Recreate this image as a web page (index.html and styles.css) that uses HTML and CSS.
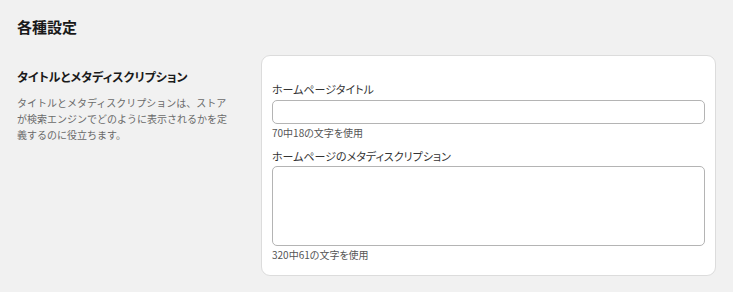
FILE: index.html
```html
<!DOCTYPE html>
<html lang="ja">
  <head>
    <meta charset="UTF-8" />
    <meta name="viewport" content="width=device-width, initial-scale=1.0" />
    <title>各種設定</title>
    <link rel="stylesheet" href="styles.css">
  </head>
  <body>
    <div class="page">
      <h1 class="page-title">各種設定</h1>
      <div class="section">
        <div class="section-info">
          <h2 class="section-title">タイトルとメタディスクリプション</h2>
          <p class="section-desc">タイトルとメタディスクリプションは、ストアが検索エンジンでどのように表示されるかを定義するのに役立ちます。</p>
        </div>
        <div class="card">
          <label class="field-label" for="page-title">ホームページタイトル</label>
          <input class="field-input" type="text" id="page-title" />
          <div class="field-help">70中18の文字を使用</div>
          <label class="field-label label-second" for="meta-desc">ホームページのメタディスクリプション</label>
          <textarea class="field-textarea" id="meta-desc"></textarea>
          <div class="field-help">320中61の文字を使用</div>
        </div>
      </div>
    </div>
  </body>
</html>
```

FILE: styles.css
```css
body {
  margin: 0;
  background-color: #f1f1f1;
  font-family: "Noto Sans CJK JP", "Noto Sans", sans-serif;
  font-feature-settings: "palt";
  color: #1f1f1f;
}

.page {
  padding: 17px 17px 0 17px;
}

.page-title {
  margin: 0;
  font-size: 15px;
  line-height: 20px;
  font-weight: 700;
  color: #1a1a1a;
}

.section {
  display: grid;
  grid-template-columns: 222px 1fr;
  gap: 22px;
  margin-top: 18px;
}

.section-info {
  padding-top: 14px;
}

.section-title {
  margin: 0;
  font-size: 12px;
  line-height: 16px;
  font-weight: 700;
  color: #1a1a1a;
}

.section-desc {
  max-width: 212px;
  margin: 10px 0 0 0;
  font-size: 10px;
  line-height: 16px;
  font-feature-settings: normal;
  color: #6a6a6a;
}

.card {
  background-color: #fff;
  border: 1px solid #dcdcdc;
  border-radius: 9px;
  padding: 25px 10px 12px 10px;
  display: flex;
  flex-direction: column;
}

.field-label {
  font-size: 11px;
  line-height: 16px;
  color: #333;
  margin-bottom: 3px;
}

.label-second {
  margin-top: 7px;
  margin-bottom: 2px;
}

.field-input,
.field-textarea {
  box-sizing: border-box;
  width: 100%;
  margin: 0;
  border: 1px solid #b4b4b4;
  border-radius: 5px;
  background-color: #fff;
  font: inherit;
  resize: none;
}

.field-input {
  height: 24px;
}

.field-textarea {
  height: 80px;
  display: block;
}

.field-help {
  font-size: 10px;
  line-height: 16px;
  color: #555;
  margin-top: 1px;
}
```
